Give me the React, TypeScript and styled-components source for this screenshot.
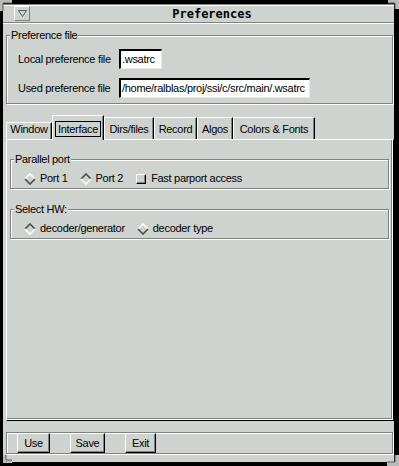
import React from "react";
import styled, { createGlobalStyle } from "styled-components";

const BG = "#cfd3cf";
const DARK = "#7f837f";
const LIGHT = "#ffffff";
const FONT = `"Liberation Sans", Arial, sans-serif`;

const Global = createGlobalStyle`
  html, body { margin: 0; padding: 0; background: #000; }
  body { width: 399px; height: 466px; overflow: hidden; font-family: ${FONT}; }
`;

const Screen = styled.div`
  position: relative;
  width: 399px;
  height: 466px;
  box-sizing: border-box;
  background: #000;
  padding: 4px 5px 4px 3px;
`;

const Corner = styled.svg<{ $x: number; $y: number }>`
  position: absolute;
  left: ${(p) => p.$x}px;
  top: ${(p) => p.$y}px;
  display: block;
`;

const Win = styled.div`
  height: 458px;
  box-sizing: border-box;
  background: ${BG};
  display: flex;
  flex-direction: column;
  padding-bottom: 8px;
  font-size: 11px;
  letter-spacing: -0.3px;
  color: #000;
`;

const TitleBar = styled.div`
  height: 19px;
  box-sizing: border-box;
  border-top: 1px solid ${DARK};
  border-bottom: 1px solid ${DARK};
  box-shadow: inset 0 1px 0 ${LIGHT}, 0 1px 0 ${LIGHT};
  display: flex;
  align-items: center;
  padding-left: 11px;
  flex-shrink: 0;
`;

const MenuButton = styled.div`
  width: 16px;
  height: 15px;
  box-sizing: border-box;
  border: 1px solid;
  border-color: ${LIGHT} ${DARK} ${DARK} ${LIGHT};
  display: flex;
  align-items: center;
  justify-content: center;
`;

const Title = styled.div`
  flex: 1;
  text-align: center;
  font-family: "DejaVu Sans Mono", monospace;
  font-weight: bold;
  font-size: 12px;
  letter-spacing: 0;
  line-height: 14px;
`;

const Group = styled.fieldset<{ $mt: number; $mr: number }>`
  margin: ${(p) => p.$mt}px ${(p) => p.$mr}px 0 3px;
  padding: 0;
  min-width: 0;
  border: 1px solid ${DARK};
  box-shadow: inset 1px 1px 0 ${LIGHT}, 1px 1px 0 ${LIGHT};
  flex-shrink: 0;
`;

const Legend = styled.legend`
  margin-left: 3px;
  padding: 0 1px;
  line-height: 12px;
  font-size: 11px;
  background: ${BG};
`;

const FileGrid = styled.div`
  display: grid;
  grid-template-columns: 101px auto;
  grid-auto-rows: 20px;
  row-gap: 9px;
  align-items: center;
  justify-items: start;
  padding: 8px 0 5px 11px;
`;

const Label = styled.span`
  line-height: 13px;
`;

const Field = styled.div<{ $w: number }>`
  width: ${(p) => p.$w}px;
  height: 20px;
  box-sizing: border-box;
  background: #fff;
  border-style: solid;
  border-width: 2px 1px 1px 2px;
  border-color: #000 #e6e9e6 #e6e9e6 #000;
  padding-left: 1px;
  line-height: 17px;
  white-space: nowrap;
  overflow: hidden;
`;

const TabRow = styled.div`
  display: flex;
  align-items: flex-end;
  height: 24px;
  margin: 11px 0 0 3px;
  flex-shrink: 0;
  position: relative;
  z-index: 1;
`;

const Tab = styled.div<{ $w: number; $h: number; $sel?: boolean }>`
  width: ${(p) => p.$w}px;
  height: ${(p) => p.$h}px;
  box-sizing: border-box;
  border-style: solid;
  border-width: 1px 1px 0 1px;
  border-color: ${LIGHT} #000 transparent ${LIGHT};
  box-shadow: inset -1px 0 0 ${DARK};
  background: ${BG};
  display: flex;
  align-items: flex-end;
  justify-content: center;
  padding-bottom: ${(p) => (p.$sel ? 3 : 4)}px;
  margin-bottom: ${(p) => (p.$sel ? -1 : 0)}px;
  line-height: 12px;
  white-space: nowrap;
`;

const Focus = styled.span`
  border: 1px solid #000;
  padding: 1px 2px;
  line-height: 12px;
`;

const Panel = styled.div`
  flex: 1;
  margin: 0 0 0 3px;
  border: 1px solid;
  border-color: ${LIGHT} #000 #000 ${LIGHT};
  box-shadow: inset -1px -1px 0 ${LIGHT}, inset -2px -2px 0 ${DARK};
  display: flex;
  flex-direction: column;
  min-height: 0;
`;

const OptionRow = styled.div`
  display: flex;
  align-items: center;
  height: 13px;
  padding: 7px 0 3px 13px;
  gap: 12px;
`;

const Option = styled.label<{ $gap: number }>`
  display: flex;
  align-items: center;
  gap: ${(p) => p.$gap}px;
  line-height: 13px;
  white-space: nowrap;
`;

const DiamondSvg = styled.svg`
  display: block;
  flex-shrink: 0;
`;

const Check = styled.span`
  width: 10px;
  height: 10px;
  box-sizing: border-box;
  border: 1px solid;
  border-color: ${LIGHT} #000 #000 ${LIGHT};
  box-shadow: inset -1px -1px 0 ${DARK};
  background: ${BG};
  margin-left: 1px;
`;

const ButtonBar = styled.div`
  margin: 11px 1px 0 3px;
  height: 22px;
  box-sizing: border-box;
  border: 1px solid ${DARK};
  box-shadow: inset 1px 1px 0 ${LIGHT}, 1px 1px 0 ${LIGHT};
  display: flex;
  gap: 20px;
  padding-left: 10px;
  flex-shrink: 0;
`;

const Button = styled.button<{ $w: number }>`
  width: ${(p) => p.$w}px;
  height: 20px;
  box-sizing: border-box;
  margin: 0;
  padding: 0;
  border: 1px solid;
  border-color: ${LIGHT} #000 #000 ${LIGHT};
  box-shadow: inset -1px -1px 0 ${DARK};
  background: ${BG};
  font-family: ${FONT};
  font-size: 11px;
  letter-spacing: -0.3px;
  color: #000;
  line-height: 18px;
`;

const Diamond = ({ on }: { on: boolean }) => (
  <DiamondSvg width={12} height={12} viewBox="0 0 12 12">
    <polygon points="6,1 11,6 6,11 1,6" fill={BG} />
    <polyline points="1,6 6,1 11,6" fill="none" stroke={on ? "#4a4e4a" : LIGHT} strokeWidth={1.6} />
    <polyline points="1,6 6,11 11,6" fill="none" stroke={on ? LIGHT : "#4a4e4a"} strokeWidth={1.6} />
  </DiamondSvg>
);

const tabs = [
  { name: "Window", w: 46, h: 17 },
  { name: "Interface", w: 52, h: 25, sel: true },
  { name: "Dirs/files", w: 50, h: 22 },
  { name: "Record", w: 43, h: 22 },
  { name: "Algos", w: 36, h: 22 },
  { name: "Colors & Fonts", w: 82, h: 22 },
];

export default function App() {
  return (
    <Screen>
      <Global />
      <Win>
        <TitleBar>
          <MenuButton>
            <svg width={9} height={7} viewBox="0 0 9 7">
              <polygon points="0.5,0.5 8.5,0.5 4.5,6.5" fill="none" stroke="#5a5e5a" strokeWidth={1} />
            </svg>
          </MenuButton>
          <Title>Preferences</Title>
        </TitleBar>

        <Group $mt={6} $mr={1}>
          <Legend>Preference file</Legend>
          <FileGrid>
            <Label>Local preference file</Label>
            <Field $w={43}>.wsatrc</Field>
            <Label>Used preference file</Label>
            <Field $w={191}>/home/ralblas/proj/ssi/c/src/main/.wsatrc</Field>
          </FileGrid>
        </Group>

        <TabRow>
          {tabs.map((t) => (
            <Tab key={t.name} $w={t.w} $h={t.h} $sel={t.sel}>
              {t.sel ? <Focus>{t.name}</Focus> : t.name}
            </Tab>
          ))}
        </TabRow>

        <Panel>
          <Group $mt={13} $mr={4}>
            <Legend>Parallel port</Legend>
            <OptionRow>
              <Option $gap={4}>
                <Diamond on={false} />
                Port 1
              </Option>
              <Option $gap={4}>
                <Diamond on={true} />
                Port 2
              </Option>
              <Option $gap={5}>
                <Check />
                Fast parport access
              </Option>
            </OptionRow>
          </Group>
          <Group $mt={14} $mr={4}>
            <Legend>Select HW:</Legend>
            <OptionRow>
              <Option $gap={4}>
                <Diamond on={true} />
                decoder/generator
              </Option>
              <Option $gap={4}>
                <Diamond on={false} />
                decoder type
              </Option>
            </OptionRow>
          </Group>
        </Panel>

        <ButtonBar>
          <Button $w={33}>Use</Button>
          <Button $w={35}>Save</Button>
          <Button $w={31}>Exit</Button>
        </ButtonBar>
      </Win>

      <Corner $x={0} $y={0} width={12} height={11} viewBox="0 0 12 11">
        <path d="M0 0 H12 V3 H3 V11 H0 Z" fill="#b8bcb8" />
        <path d="M3 11 V3 H12" fill="none" stroke="#5a5e5a" strokeWidth={1} />
      </Corner>
      <Corner $x={388} $y={0} width={11} height={9} viewBox="0 0 11 9">
        <path d="M0 0 H11 V9 H7 V3 H0 Z" fill="#b8bcb8" />
        <path d="M0 3 H7 V9" fill="none" stroke="#5a5e5a" strokeWidth={1} />
      </Corner>
      <Corner $x={3} $y={455} width={9} height={8} viewBox="0 0 9 8">
        <path d="M0 0 H3 V5 H9 V8 H0 Z" fill="#b8bcb8" />
        <path d="M3 0 V5 H9" fill="none" stroke="#5a5e5a" strokeWidth={1} />
      </Corner>
      <Corner $x={387} $y={455} width={12} height={11} viewBox="0 0 12 11">
        <path d="M8 0 H12 V11 H0 V7 H8 Z" fill="#b8bcb8" />
        <path d="M0 7 H8 V0" fill="none" stroke="#5a5e5a" strokeWidth={1} />
      </Corner>
    </Screen>
  );
}
